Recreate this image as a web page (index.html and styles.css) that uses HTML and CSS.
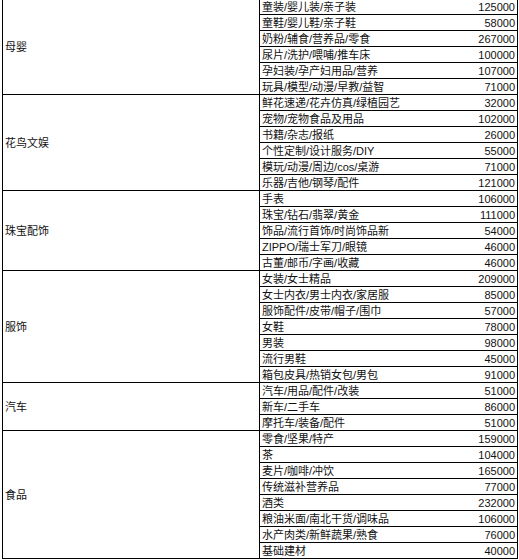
FILE: index.html
```html
<!DOCTYPE html>
<html lang="zh-CN">
<head>
<meta charset="utf-8">
<title>类目表</title>
<link rel="stylesheet" href="styles.css">
</head>
<body>
<table class="sheet">
  <colgroup>
    <col class="c-cat">
    <col class="c-sub">
    <col class="c-num">
  </colgroup>
  <tbody>
    <tr><td class="cat" rowspan="6">母婴</td><td class="sub">童装/婴儿装/亲子装</td><td class="num">125000</td></tr>
    <tr><td class="sub">童鞋/婴儿鞋/亲子鞋</td><td class="num">58000</td></tr>
    <tr><td class="sub">奶粉/辅食/营养品/零食</td><td class="num">267000</td></tr>
    <tr><td class="sub">尿片/洗护/喂哺/推车床</td><td class="num">100000</td></tr>
    <tr><td class="sub">孕妇装/孕产妇用品/营养</td><td class="num">107000</td></tr>
    <tr><td class="sub">玩具/模型/动漫/早教/益智</td><td class="num">71000</td></tr>

    <tr><td class="cat" rowspan="6">花鸟文娱</td><td class="sub">鲜花速递/花卉仿真/绿植园艺</td><td class="num">32000</td></tr>
    <tr><td class="sub">宠物/宠物食品及用品</td><td class="num">102000</td></tr>
    <tr><td class="sub">书籍/杂志/报纸</td><td class="num">26000</td></tr>
    <tr><td class="sub">个性定制/设计服务/DIY</td><td class="num">55000</td></tr>
    <tr><td class="sub">模玩/动漫/周边/cos/桌游</td><td class="num">71000</td></tr>
    <tr><td class="sub">乐器/吉他/钢琴/配件</td><td class="num">121000</td></tr>

    <tr><td class="cat" rowspan="5">珠宝配饰</td><td class="sub">手表</td><td class="num">106000</td></tr>
    <tr><td class="sub">珠宝/钻石/翡翠/黄金</td><td class="num">111000</td></tr>
    <tr><td class="sub">饰品/流行首饰/时尚饰品新</td><td class="num">54000</td></tr>
    <tr><td class="sub">ZIPPO/瑞士军刀/眼镜</td><td class="num">46000</td></tr>
    <tr><td class="sub">古董/邮币/字画/收藏</td><td class="num">46000</td></tr>

    <tr><td class="cat" rowspan="7">服饰</td><td class="sub">女装/女士精品</td><td class="num">209000</td></tr>
    <tr><td class="sub">女士内衣/男士内衣/家居服</td><td class="num">85000</td></tr>
    <tr><td class="sub">服饰配件/皮带/帽子/围巾</td><td class="num">57000</td></tr>
    <tr><td class="sub">女鞋</td><td class="num">78000</td></tr>
    <tr><td class="sub">男装</td><td class="num">98000</td></tr>
    <tr><td class="sub">流行男鞋</td><td class="num">45000</td></tr>
    <tr><td class="sub">箱包皮具/热销女包/男包</td><td class="num">91000</td></tr>

    <tr><td class="cat" rowspan="3">汽车</td><td class="sub">汽车/用品/配件/改装</td><td class="num">51000</td></tr>
    <tr><td class="sub">新车/二手车</td><td class="num">86000</td></tr>
    <tr><td class="sub">摩托车/装备/配件</td><td class="num">51000</td></tr>

    <tr><td class="cat" rowspan="8">食品</td><td class="sub">零食/坚果/特产</td><td class="num">159000</td></tr>
    <tr><td class="sub">茶</td><td class="num">104000</td></tr>
    <tr><td class="sub">麦片/咖啡/冲饮</td><td class="num">165000</td></tr>
    <tr><td class="sub">传统滋补营养品</td><td class="num">77000</td></tr>
    <tr><td class="sub">酒类</td><td class="num">232000</td></tr>
    <tr><td class="sub">粮油米面/南北干货/调味品</td><td class="num">106000</td></tr>
    <tr><td class="sub">水产肉类/新鲜蔬果/熟食</td><td class="num">76000</td></tr>
    <tr><td class="sub">基础建材</td><td class="num">40000</td></tr>
  </tbody>
</table>
</body>
</html>
```

FILE: styles.css
```css
html, body {
  margin: 0;
  padding: 0;
  background: #ffffff;
}

body {
  overflow: hidden;
}

.sheet {
  border-collapse: collapse;
  table-layout: fixed;
  width: 516px;
  margin: -2px 0 0 2px;
  font-family: "Liberation Sans", "Noto Sans CJK SC", sans-serif;
  font-size: 11px;
  color: #111111;
}

.c-cat { width: 257px; }
.c-sub { width: 180px; }
.c-num { width: 78px; }

.sheet tr {
  height: 16px;
}

.sheet td {
  border: 1px solid #000000;
  padding: 0 2px;
  line-height: 14px;
  white-space: nowrap;
  overflow: hidden;
}

.sheet td.cat {
  vertical-align: middle;
  padding-left: 2px;
}

.sheet td.sub {
  border-right: none;
  padding-left: 2px;
}

.sheet td.num {
  border-left: none;
  text-align: right;
  padding-right: 2px;
}
```
